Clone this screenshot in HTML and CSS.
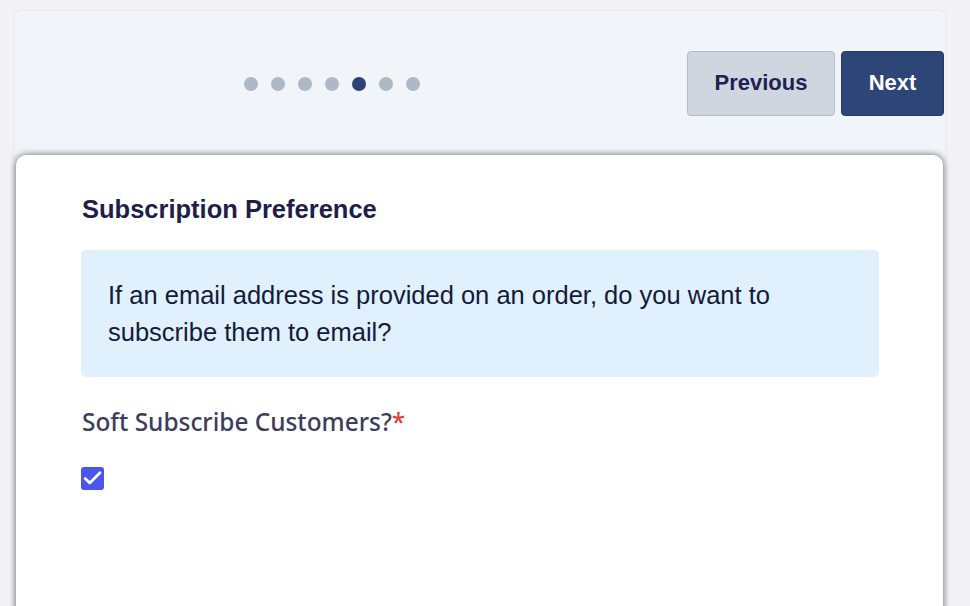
FILE: index.html
```html
<!DOCTYPE html>
<html>
<head>
<meta charset="utf-8">
<link rel="stylesheet" href="styles.css">
</head>
<body>
<div class="panel">
  <div class="topbar">
    <div class="dots">
      <span class="dot"></span>
      <span class="dot"></span>
      <span class="dot"></span>
      <span class="dot"></span>
      <span class="dot active"></span>
      <span class="dot"></span>
      <span class="dot"></span>
    </div>
    <div class="actions">
      <button class="btn btn-prev">Previous</button>
      <button class="btn btn-next">Next</button>
    </div>
  </div>
  <div class="card">
    <h2 class="title">Subscription Preference</h2>
    <div class="info">If an email address is provided on an order, do you want to subscribe them to email?</div>
    <div class="label">Soft Subscribe Customers?<span class="req">*</span></div>
    <div class="checkbox">
      <svg width="23" height="23" viewBox="0 0 23 23"><path d="M4.2 11.6 L8.8 16 L19 5.8" fill="none" stroke="#fff" stroke-width="2.8" stroke-linecap="round" stroke-linejoin="round"/></svg>
    </div>
  </div>
</div>
</body>
</html>
```
FILE: styles.css
```css
html, body {
  margin: 0;
  padding: 0;
  height: 100%;
  overflow: hidden;
}
body {
  background: #f3f2f4;
  padding: 11px 25px 0 15px;
  box-sizing: border-box;
  font-family: "Liberation Sans", Arial, sans-serif;
}
.panel {
  width: 930px;
  height: 620px;
  background: #f1f4f8;
  border-radius: 6px;
  box-shadow: 0 0 4px rgba(0, 0, 0, 0.07);
  display: flex;
  flex-direction: column;
}
.topbar {
  height: 144px;
  flex: none;
  display: flex;
  align-items: center;
  justify-content: space-between;
  padding-right: 1px;
}
.dots {
  display: flex;
  gap: 13px;
  margin-left: 229px;
  margin-top: 1px;
}
.dot {
  width: 14px;
  height: 14px;
  border-radius: 50%;
  background: #afb9c6;
}
.dot.active {
  background: #2c4374;
}
.actions {
  display: flex;
  gap: 6px;
}
.btn {
  height: 65px;
  border-radius: 4px;
  font-family: "Liberation Sans", Arial, sans-serif;
  font-weight: bold;
  font-size: 22px;
  padding: 0;
  box-sizing: border-box;
}
.btn-prev {
  width: 148px;
  background: #cfd6df;
  border: 1px solid #b3bdca;
  color: #1f2251;
}
.btn-next {
  width: 103px;
  background: #2d4577;
  border: 1px solid #253a68;
  color: #ffffff;
}
.card {
  flex: 1;
  margin: 0 2px 0 1px;
  background: #ffffff;
  border-radius: 10px;
  box-shadow: 0 0 7px rgba(0, 0, 0, 0.6);
  padding: 40px 64px 0 66px;
}
.title {
  margin: 0;
  font-size: 25.5px;
  line-height: 29px;
  font-weight: bold;
  color: #1d1e4a;
}
.info {
  margin-top: 26px;
  margin-left: -1px;
  background: #e0f0fd;
  border-radius: 5px;
  padding: 27px 27px 26px 27px;
  font-size: 25.5px;
  line-height: 37px;
  color: #141a3b;
}
.label {
  margin-top: 28px;
  font-family: "Noto Sans", sans-serif;
  font-weight: 500;
  font-size: 24.4px;
  line-height: 34px;
  color: #3b3d5d;
}
.req {
  color: #d8413b;
}
.checkbox {
  margin-top: 28px;
  margin-left: -1px;
  width: 23px;
  height: 23px;
  border-radius: 3px;
  background: #4b56ea;
}
.checkbox svg {
  display: block;
}
```
